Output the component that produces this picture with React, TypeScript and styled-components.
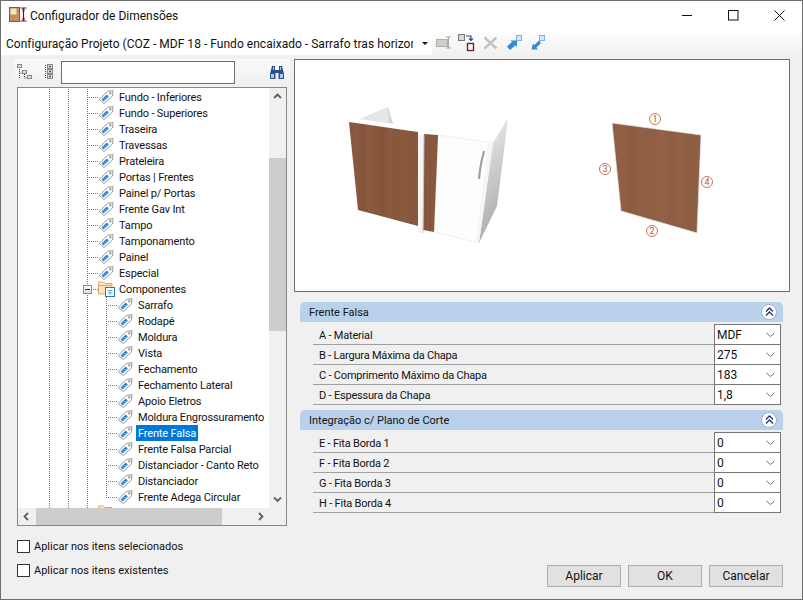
import React from 'react';
import styled, { createGlobalStyle } from 'styled-components';

const GlobalStyle = createGlobalStyle`
  html, body {
    margin: 0;
    padding: 0;
    background: #f0f0f0;
  }
  * {
    box-sizing: border-box;
  }
`;

type TreeItem = {
  label: string;
  level: 3 | 4;
  kind?: 'tag' | 'group' | 'folder';
  selected?: boolean;
  last?: boolean;
};

const treeItems: TreeItem[] = [
  { label: 'Fundo - Inferiores', level: 3 },
  { label: 'Fundo - Superiores', level: 3 },
  { label: 'Traseira', level: 3 },
  { label: 'Travessas', level: 3 },
  { label: 'Prateleira', level: 3 },
  { label: 'Portas | Frentes', level: 3 },
  { label: 'Painel p/ Portas', level: 3 },
  { label: 'Frente Gav Int', level: 3 },
  { label: 'Tampo', level: 3 },
  { label: 'Tamponamento', level: 3 },
  { label: 'Painel', level: 3 },
  { label: 'Especial', level: 3 },
  { label: 'Componentes', level: 3, kind: 'group' },
  { label: 'Sarrafo', level: 4 },
  { label: 'Rodapé', level: 4 },
  { label: 'Moldura', level: 4 },
  { label: 'Vista', level: 4 },
  { label: 'Fechamento', level: 4 },
  { label: 'Fechamento Lateral', level: 4 },
  { label: 'Apoio Eletros', level: 4 },
  { label: 'Moldura Engrossuramento', level: 4 },
  { label: 'Frente Falsa', level: 4, selected: true },
  { label: 'Frente Falsa Parcial', level: 4 },
  { label: 'Distanciador - Canto Reto', level: 4 },
  { label: 'Distanciador', level: 4 },
  { label: 'Frente Adega Circular', level: 4, last: true },
  { label: '', level: 3, kind: 'folder' },
];

const sections = [
  {
    title: 'Frente Falsa',
    rows: [
      ['A - Material', 'MDF'],
      ['B - Largura Máxima da Chapa', '275'],
      ['C - Comprimento Máximo da Chapa', '183'],
      ['D - Espessura da Chapa', '1,8'],
    ],
  },
  {
    title: 'Integração c/ Plano de Corte',
    rows: [
      ['E - Fita Borda 1', '0'],
      ['F - Fita Borda 2', '0'],
      ['G - Fita Borda 3', '0'],
      ['H - Fita Borda 4', '0'],
    ],
  },
];

const TagIcon = () => (
  <IconSvg width="16" height="16" viewBox="0 0 16 16">
    <path d="M1 10.5 9.5 2.5 15 1.5 14.5 7 6 14.5Z" fill="#fff" stroke="#9a9a9a" />
    <path d="M3.5 10.5 8.8 5.6 10.8 7.6 5.6 12.6Z" fill="#2a7fd4" />
    <path d="M5.4 9.6 7 11.2M7.2 7.9 8.8 9.5" stroke="#a6cff2" strokeWidth="0.8" />
    <circle cx="12.3" cy="4.2" r="1.1" fill="#e4e4e4" stroke="#8a8a8a" strokeWidth="0.7" />
  </IconSvg>
);

const FolderIcon = ({ badge }: { badge?: boolean }) => (
  <IconSvg width="17" height="16" viewBox="0 0 17 16">
    <path d="M0.5 2.5V1h5l1.5 1.5h7V13H0.5Z" fill="#fbe6bf" stroke="#e0a45e" />
    <path d="M0.5 4.5H14" stroke="#e0a45e" />
    {badge && (
      <>
        <rect x="7.5" y="6.5" width="9" height="9" fill="#fff" stroke="#1f78c8" />
        <path d="M9.5 9.5h5M9.5 12h5M12 9v5" stroke="#6aa8de" />
      </>
    )}
  </IconSvg>
);

const TitleIcon = () => (
  <svg width="18" height="16" viewBox="0 0 18 16">
    <rect x="0.5" y="0.5" width="10" height="14" fill="#c98a68" stroke="#7d5a48" />
    <rect x="1.5" y="1.5" width="6" height="6" fill="#efe8b8" />
    <path d="M11.5 1h6M14.5 1v13M11.5 14h6M13 3h3M13 12h3" stroke="#6f1220" strokeWidth="1.2" fill="none" />
  </svg>
);

const Minimize = () => (
  <svg width="11" height="11" viewBox="0 0 11 11">
    <path d="M0 5.5h10" stroke="#111" />
  </svg>
);

const Maximize = () => (
  <svg width="11" height="11" viewBox="0 0 11 11">
    <rect x="0.5" y="0.5" width="9.5" height="9.5" fill="none" stroke="#111" />
  </svg>
);

const CloseX = () => (
  <svg width="11" height="11" viewBox="0 0 11 11">
    <path d="M0.5 0.5 10.5 10.5M10.5 0.5 0.5 10.5" stroke="#111" />
  </svg>
);

const ChevronDown = () => (
  <svg width="9" height="6" viewBox="0 0 9 6">
    <path d="M0.5 0.8 4.5 4.6 8.5 0.8" fill="none" stroke="#6a6a6a" />
  </svg>
);

const ScrollArrow = ({ dir }: { dir: 'up' | 'down' | 'left' | 'right' }) => {
  const d = {
    up: 'M1 6 4.5 2.5 8 6',
    down: 'M1 2.5 4.5 6 8 2.5',
    left: 'M6 1 2.5 4.5 6 8',
    right: 'M3 1 6.5 4.5 3 8',
  }[dir];
  return (
    <svg width="9" height="9" viewBox="0 0 9 9">
      <path d={d} fill="none" stroke="#5f5f5f" strokeWidth="1.8" />
    </svg>
  );
};

const CollapseIcon = () => (
  <svg width="16" height="16" viewBox="0 0 16 16">
    <path d="M2.5 5v10M2.5 9h3M7.5 10v4M7.5 14h3" stroke="#444" strokeDasharray="1 1" fill="none" />
    <rect x="0.5" y="0.5" width="4" height="3" fill="#ddd" stroke="#888" />
    <rect x="5.5" y="6.5" width="4" height="3" fill="#ddd" stroke="#888" />
    <rect x="10.5" y="11.5" width="4" height="3" fill="#ddd" stroke="#888" />
  </svg>
);

const ExpandIcon = () => (
  <svg width="10" height="16" viewBox="0 0 10 16">
    <path d="M1.5 1v14" stroke="#444" strokeDasharray="1 1" />
    <rect x="3.5" y="0.5" width="5" height="4" fill="#ddd" stroke="#888" />
    <rect x="3.5" y="5.5" width="5" height="4" fill="#ddd" stroke="#888" />
    <rect x="3.5" y="10.5" width="5" height="4" fill="#ddd" stroke="#888" />
    <path d="M6 1.5v2M5 2.5h2M6 6.5v2M5 7.5h2M6 11.5v2M5 12.5h2" stroke="#333" strokeWidth="0.7" />
  </svg>
);

const Binoculars = () => (
  <svg width="16" height="15" viewBox="0 0 16 15">
    <path d="M3 1h3v4h4V1h3l2 8v5H9.5V8h-3v6H1V9Z" fill="#27518f" />
    <rect x="2" y="9" width="3" height="4" fill="#a9c8ea" />
    <rect x="11" y="9" width="3" height="4" fill="#a9c8ea" />
    <rect x="4" y="2" width="1" height="3" fill="#a9c8ea" />
    <rect x="11" y="2" width="1" height="3" fill="#a9c8ea" />
  </svg>
);

const ArrowBadge = ({ flip }: { flip?: boolean }) => (
  <svg width="18" height="18" viewBox="0 0 18 18">
    <rect x="11.5" y="1.5" width="5" height="5" fill="#d6e8f8" stroke="#7fb2e0" />
    {flip ? (
      <path d="M11 6.5 6.5 11 5 9.5 3.5 15.5H10L8.3 13.8 13 9Z" fill="#2e8bdc" />
    ) : (
      <path d="M2 12.5 7 8 5.5 6.5H12V13L10.5 11.2 5 16Z" fill="#2e8bdc" />
    )}
  </svg>
);

const RenameIcon = () => (
  <svg width="16" height="14" viewBox="0 0 16 14">
    <rect x="0.5" y="3.5" width="11" height="7" fill="#cfcfc9" stroke="#b0b0aa" />
    <path d="M10 1h5M12.5 1v11M10 12h5" stroke="#a8a8a2" fill="none" />
  </svg>
);

const CopyIcon = () => (
  <svg width="17" height="18" viewBox="0 0 17 18">
    <rect x="0.5" y="0.5" width="6" height="6" fill="#d8d8d8" stroke="#777" />
    <path d="M8 2h5v4M11 4.5 13 6.5 15 4.5" fill="none" stroke="#1d4f9c" strokeWidth="1.2" />
    <rect x="9.5" y="9.5" width="6" height="7" fill="#f4f4f4" stroke="#741818" strokeWidth="1.3" />
  </svg>
);

const DeleteIcon = () => (
  <svg width="15" height="14" viewBox="0 0 15 14">
    <path d="M1.5 1.5 13.5 12.5M13.5 1.5 1.5 12.5" stroke="#c2c2c0" strokeWidth="2.4" />
  </svg>
);

const WoodStops = ({ base }: { base: string[] }) => (
  <>
    {base.map((color, i) => (
      <stop key={i} offset={`${(i / (base.length - 1)) * 100}%`} stopColor={color} />
    ))}
  </>
);

const Scene = () => (
  <SceneSvg viewBox="295 60 494 231">
    <defs>
      <linearGradient id="woodA">
        <WoodStops base={['#85563c', '#8a5a40', '#83543a', '#8c5c41', '#87583d', '#83543a', '#8b5b40', '#86573c', '#8a5a3f', '#84553b', '#89593e']} />
      </linearGradient>
      <linearGradient id="woodB">
        <WoodStops base={['#8c5e43', '#925f45', '#8b5c41', '#916146', '#8d5e42', '#936247', '#8c5d42', '#916146', '#8c5d42', '#906045']} />
      </linearGradient>
      <linearGradient id="sidePanel" x1="0" y1="0" x2="0.25" y2="1">
        <stop offset="0%" stopColor="#f8f8f8" />
        <stop offset="40%" stopColor="#d4d4d4" />
        <stop offset="100%" stopColor="#aaaaaa" />
      </linearGradient>
    </defs>
    <polygon points="359,119 388,107 393,124" fill="#e6e6e6" />
    <polygon points="388,107 393,124 389,122" fill="#d4d4d4" />
    <polygon points="438,135 493,143 479,243 434,232" fill="#fdfdfd" stroke="#efefef" />
    <polygon points="493,143 508,118 497,206 479,243" fill="url(#sidePanel)" />
    <polygon points="488,142 493,143 479,243 476,242" fill="#f6f6f6" />
    <polygon points="349,122 418,132 418,226 358,210" fill="url(#woodA)" />
    <polygon points="424,134 438,135 434,232 423,230" fill="url(#woodA)" />
    <polygon points="418,136 424,134 423,233 418,232" fill="#f4f4f4" />
    <line x1="424" y1="135" x2="423" y2="233" stroke="#c4c4c4" />
    <path d="M484 151 Q480 166 479 179" fill="none" stroke="#a0a0a0" strokeWidth="2.2" />
    <polygon points="612,123 701,135 697,233 621,211" fill="url(#woodB)" stroke="#e8e8e8" strokeWidth="0.7" />
    {[
      ['1', 655, 119],
      ['2', 652, 231],
      ['3', 605, 169],
      ['4', 707, 182],
    ].map(([label, cx, cy]) => (
      <g key={label as string}>
        <circle cx={cx as number} cy={cy as number} r="5.5" fill="#fff" stroke="#c9775a" />
        <SceneLabel x={cx as number} y={(cy as number) + 3} textAnchor="middle">
          {label}
        </SceneLabel>
      </g>
    ))}
  </SceneSvg>
);

const App: React.FC = () => {
  return (
    <Window>
      <GlobalStyle />
      <TitleBar>
        <TitleIconWrap>
          <TitleIcon />
        </TitleIconWrap>
        <Title>Configurador de Dimensões</Title>
        <WindowButtons>
          <WindowButton>
            <Minimize />
          </WindowButton>
          <WindowButton>
            <Maximize />
          </WindowButton>
          <WindowButton>
            <CloseX />
          </WindowButton>
        </WindowButtons>
      </TitleBar>
      <Toolbar>
        <ConfigCombo>
          <ConfigText>Configuração Projeto (COZ - MDF 18 - Fundo encaixado - Sarrafo tras horizontal)</ConfigText>
          <ComboCaret />
        </ConfigCombo>
        <ToolIcon $width={22}>
          <RenameIcon />
        </ToolIcon>
        <ToolIcon $width={25}>
          <CopyIcon />
        </ToolIcon>
        <ToolIcon $width={22}>
          <DeleteIcon />
        </ToolIcon>
        <ToolIcon $width={23}>
          <ArrowBadge />
        </ToolIcon>
        <ToolIcon $width={23}>
          <ArrowBadge flip />
        </ToolIcon>
      </Toolbar>
      <Body>
        <LeftColumn>
          <TreeTools>
            <TreeToolButton $width={27}>
              <CollapseIcon />
            </TreeToolButton>
            <TreeToolButton $width={17}>
              <ExpandIcon />
            </TreeToolButton>
            <SearchBox />
            <FindButton>
              <Binoculars />
            </FindButton>
          </TreeTools>
          <Tree>
            <TreeBody>
              {treeItems.map((item, i) => (
                <TreeRow key={i}>
                  <Guide />
                  <Guide />
                  {item.level === 4 && <Guide />}
                  <Elbow $last={item.last}>{item.kind === 'group' && <Expander />}</Elbow>
                  {item.kind === 'group' ? (
                    <FolderIcon badge />
                  ) : item.kind === 'folder' ? (
                    <FolderIcon />
                  ) : (
                    <TagIcon />
                  )}
                  <TreeLabel $selected={item.selected} $group={item.kind === 'group'}>
                    {item.label}
                  </TreeLabel>
                </TreeRow>
              ))}
            </TreeBody>
            <VScroll>
              <ArrowButton>
                <ScrollArrow dir="up" />
              </ArrowButton>
              <VThumb />
              <ArrowButton>
                <ScrollArrow dir="down" />
              </ArrowButton>
            </VScroll>
            <HScroll>
              <ArrowButton>
                <ScrollArrow dir="left" />
              </ArrowButton>
              <HThumb />
              <ArrowButton $end>
                <ScrollArrow dir="right" />
              </ArrowButton>
            </HScroll>
            <Corner />
          </Tree>
          <Checks>
            <CheckRow>
              <CheckBox />
              <CheckLabel>Aplicar nos itens selecionados</CheckLabel>
            </CheckRow>
            <CheckRow>
              <CheckBox />
              <CheckLabel>Aplicar nos itens existentes</CheckLabel>
            </CheckRow>
          </Checks>
        </LeftColumn>
        <RightColumn>
          <Preview>
            <Scene />
          </Preview>
          <Props>
            {sections.map((section) => (
              <Section key={section.title}>
                <SectionHeader>
                  {section.title}
                  <CollapseButton>
                    <svg width="9" height="10" viewBox="0 0 9 10">
                      <path d="M1 4.5 4.5 1 8 4.5M1 8.5 4.5 5 8 8.5" fill="none" stroke="#27326e" strokeWidth="1.3" />
                    </svg>
                  </CollapseButton>
                </SectionHeader>
                <Rows>
                  {section.rows.map(([label, value]) => (
                    <Row key={label}>
                      <RowLabel>{label}</RowLabel>
                      <Combo>
                        {value}
                        <ChevronDown />
                      </Combo>
                    </Row>
                  ))}
                </Rows>
              </Section>
            ))}
          </Props>
          <Buttons>
            <Button>Aplicar</Button>
            <Button>OK</Button>
            <Button>Cancelar</Button>
          </Buttons>
        </RightColumn>
      </Body>
    </Window>
  );
};

export default App;

const Window = styled.div`
  width: 803px;
  height: 600px;
  border: 1px solid #6f6f6f;
  background: #f0f0f0;
  color: #111;
  font-family: Roboto, 'Liberation Sans', sans-serif;
  font-size: 12px;
  display: flex;
  flex-direction: column;
  overflow: hidden;
`;

const IconSvg = styled.svg`
  flex: none;
`;

const TitleBar = styled.div`
  height: 30px;
  background: #fff;
  display: flex;
  align-items: center;
  flex: none;
  padding-bottom: 2px;
`;

const TitleIconWrap = styled.div`
  width: 29px;
  padding-left: 8px;
  display: flex;
  align-items: center;
`;

const Title = styled.div`
  flex: 1;
  padding-top: 2px;
`;

const WindowButtons = styled.div`
  display: flex;
  height: 28px;
`;

const WindowButton = styled.div`
  width: 46px;
  height: 28px;
  display: flex;
  align-items: center;
  justify-content: center;
`;

const Toolbar = styled.div`
  height: 24px;
  flex: none;
  background: linear-gradient(#fdfdfd, #f1f1f1);
  display: flex;
  align-items: center;
`;

const ConfigCombo = styled.div`
  width: 431px;
  height: 24px;
  background: #fff;
  display: flex;
  align-items: center;
  padding-left: 5px;
  margin-right: 4px;
`;

const ConfigText = styled.div`
  width: 407px;
  padding-top: 1px;
  white-space: nowrap;
  overflow: hidden;
  letter-spacing: 0.03px;
`;

const ComboCaret = styled.div`
  margin-left: 9px;
  width: 0;
  height: 0;
  border-left: 3px solid transparent;
  border-right: 3px solid transparent;
  border-top: 3px solid #111;
`;

const ToolIcon = styled.div<{ $width: number }>`
  width: ${(p) => p.$width}px;
  height: 24px;
  display: flex;
  align-items: center;
`;

const Body = styled.div`
  flex: 1;
  display: flex;
  padding: 4px 12px 12px 13px;
  gap: 4px;
  min-height: 0;
`;

const LeftColumn = styled.div`
  width: 276px;
  flex: none;
  display: flex;
  flex-direction: column;
`;

const TreeTools = styled.div`
  height: 26px;
  flex: none;
  background: linear-gradient(#fafafa, #efefef);
  display: flex;
  align-items: center;
  padding-left: 3px;
`;

const TreeToolButton = styled.div<{ $width: number }>`
  width: ${(p) => p.$width}px;
  display: flex;
  align-items: center;
`;

const SearchBox = styled.div`
  width: 174px;
  height: 23px;
  background: #fff;
  border: 1px solid #6e6e6e;
`;

const FindButton = styled.div`
  margin-left: 34px;
  display: flex;
`;

const Tree = styled.div`
  margin: 2px 0 0 3px;
  width: 270px;
  height: 439px;
  flex: none;
  border: 1px solid #828790;
  background: #fff;
  display: grid;
  grid-template-columns: 251px 17px;
  grid-template-rows: 420px 17px;
  font-size: 11px;
`;

const TreeBody = styled.div`
  overflow: hidden;
  padding: 1px 0 0 31px;
`;

const TreeRow = styled.div`
  height: 16px;
  display: flex;
  align-items: center;
`;

const Guide = styled.div`
  width: 19px;
  height: 16px;
  flex: none;
  background: repeating-linear-gradient(#777 0 1px, transparent 1px 2px) left top / 1px 100% no-repeat;
`;

const Elbow = styled.div<{ $last?: boolean }>`
  position: relative;
  width: 11px;
  height: 16px;
  flex: none;
  background:
    repeating-linear-gradient(#777 0 1px, transparent 1px 2px) left top / 1px ${(p) => (p.$last ? '9px' : '100%')} no-repeat,
    repeating-linear-gradient(90deg, #777 0 1px, transparent 1px 2px) left 8px / 100% 1px no-repeat;
`;

const Expander = styled.div`
  position: absolute;
  left: -4px;
  top: 4px;
  width: 9px;
  height: 9px;
  border: 1px solid #8a8a8a;
  background: linear-gradient(#fff, #ddd);
  &::after {
    content: '';
    position: absolute;
    left: 1px;
    top: 3px;
    width: 5px;
    height: 1px;
    background: #333;
  }
`;

const TreeLabel = styled.div<{ $selected?: boolean; $group?: boolean }>`
  margin-left: ${(p) => (p.$group ? '2px' : '3px')};
  height: 16px;
  padding: 1px 2px 0;
  line-height: 16px;
  letter-spacing: -0.15px;
  white-space: nowrap;
  background: ${(p) => (p.$selected ? '#0078d7' : 'transparent')};
  color: ${(p) => (p.$selected ? '#fff' : '#111')};
`;

const VScroll = styled.div`
  background: #f0f0f0;
  display: flex;
  flex-direction: column;
`;

const HScroll = styled.div`
  background: #f0f0f0;
  display: flex;
`;

const Corner = styled.div`
  background: #f0f0f0;
`;

const ArrowButton = styled.div<{ $end?: boolean }>`
  width: 17px;
  height: 17px;
  flex: none;
  display: flex;
  align-items: center;
  justify-content: center;
  margin-left: ${(p) => (p.$end ? 'auto' : '0')};
`;

const VThumb = styled.div`
  width: 17px;
  height: 173px;
  margin-top: 53px;
  margin-bottom: auto;
  background: #cdcdcd;
`;

const HThumb = styled.div`
  width: 186px;
  height: 17px;
  margin-left: 1px;
  background: #cdcdcd;
`;

const Checks = styled.div`
  margin: 14px 0 0 3px;
  display: flex;
  flex-direction: column;
  gap: 11px;
`;

const CheckRow = styled.div`
  height: 13px;
  display: flex;
  align-items: center;
  gap: 4px;
  white-space: nowrap;
`;

const CheckLabel = styled.span`
  font-size: 11px;
`;

const CheckBox = styled.div`
  width: 13px;
  height: 13px;
  flex: none;
  background: #fff;
  border: 1px solid #333;
`;

const RightColumn = styled.div`
  width: 496px;
  flex: none;
  display: flex;
  flex-direction: column;
`;

const Preview = styled.div`
  height: 233px;
  flex: none;
  background: #fff;
  border: 1px solid #6e6e6e;
`;

const SceneSvg = styled.svg`
  display: block;
  width: 494px;
  height: 231px;
`;

const SceneLabel = styled.text`
  font-family: Roboto, sans-serif;
  font-size: 9px;
  fill: #b8553a;
`;

const Props = styled.div`
  margin: 10px 0 0 6px;
  width: 483px;
  display: flex;
  flex-direction: column;
  gap: 5px;
`;

const Section = styled.div`
  display: flex;
  flex-direction: column;
`;

const SectionHeader = styled.div`
  height: 20px;
  background: #b9d1ea;
  border-radius: 5px 5px 0 0;
  padding-left: 9px;
  line-height: 21px;
  font-size: 11px;
  position: relative;
`;

const CollapseButton = styled.div`
  position: absolute;
  right: 6px;
  top: 2px;
  width: 16px;
  height: 16px;
  border-radius: 50%;
  background: #fff;
  border: 1px solid #9db4cf;
  display: flex;
  align-items: center;
  justify-content: center;
`;

const Rows = styled.div`
  margin: 0 2px 0 13px;
  padding-top: 3px;
`;

const Row = styled.div`
  height: 20px;
  border-bottom: 1px solid #a0a0a0;
  display: flex;
`;

const RowLabel = styled.div`
  flex: 1;
  padding: 1px 0 0 6px;
  line-height: 20px;
  font-size: 11px;
  letter-spacing: -0.2px;
`;

const Combo = styled.div`
  width: 67px;
  height: 21px;
  margin-top: -1px;
  background: #fff;
  border: 1px solid #777;
  display: flex;
  align-items: center;
  justify-content: space-between;
  padding: 0 5px 0 2px;
`;

const Buttons = styled.div`
  margin-top: auto;
  padding-right: 7px;
  display: flex;
  justify-content: flex-end;
  gap: 7px;
`;

const Button = styled.div`
  width: 74px;
  height: 22px;
  background: #e1e1e1;
  border: 1px solid #adadad;
  display: flex;
  align-items: center;
  justify-content: center;
`;
